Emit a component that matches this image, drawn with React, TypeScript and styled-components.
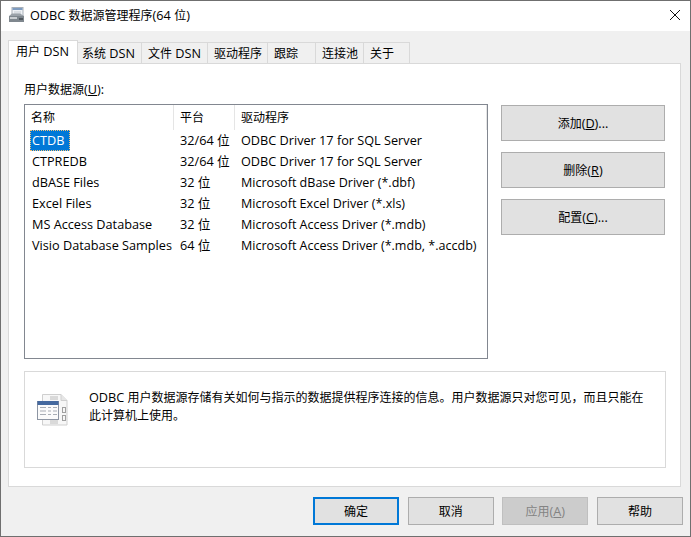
import styled, { createGlobalStyle } from "styled-components";

const Global = createGlobalStyle`
  html, body {
    margin: 0;
    padding: 0;
    background: #f0f0f0;
  }
  body {
    font-family: "Open Sans", "Noto Sans CJK SC", sans-serif;
    font-size: 12px;
    color: #000;
  }
`;

// latin text runs a little larger than the CJK around it
const L = styled.span`
  font-size: 12.7px;
`;

const Window = styled.div`
  width: 691px;
  height: 537px;
  box-sizing: border-box;
  border: 1px solid #6f6f6f;
  display: flex;
  flex-direction: column;
  overflow: hidden;
`;

const TitleBar = styled.div`
  height: 30px;
  flex: none;
  box-sizing: border-box;
  background: #fff;
  display: flex;
  align-items: center;
  padding: 0 8px 2px;
  gap: 5px;
  white-space: pre;
`;

const TitleText = styled.div``;

const CloseButton = styled.div`
  margin-left: auto;
  margin-right: 1px;
  display: flex;
`;

const Body = styled.div`
  flex: 1;
  display: flex;
  flex-direction: column;
  padding: 9px 7px 0;
  background: #f0f0f0;
`;

const Tabs = styled.div`
  display: flex;
  height: 24px;
  flex: none;
  align-items: flex-end;
  position: relative;
  z-index: 1;
`;

const Tab = styled.div<{ $width: number; $active?: boolean; $pad?: number }>`
  width: ${({ $width }) => $width}px;
  height: ${({ $active }) => ($active ? "24px" : "22px")};
  box-sizing: border-box;
  border: 1px solid #d9d9d9;
  border-left-width: ${({ $active }) => ($active ? "1px" : "0")};
  border-bottom: ${({ $active }) => ($active ? "none" : "1px solid #d9d9d9")};
  background: ${({ $active }) => ($active ? "#fff" : "#f0f0f0")};
  padding-left: ${({ $pad }) => $pad ?? 6}px;
  line-height: 21px;
  white-space: pre;
`;

const Panel = styled.div`
  height: 424px;
  flex: none;
  box-sizing: border-box;
  width: 673px;
  margin-top: -1px;
  background: #fff;
  border: 1px solid #d9d9d9;
  padding: 17px 15px 0;
`;

const SourceLabel = styled.div`
  height: 23px;
  line-height: 17px;
`;

const SourceRow = styled.div`
  display: flex;
  gap: 13px;
  align-items: flex-start;
`;

const ListBox = styled.div`
  width: 464px;
  height: 255px;
  box-sizing: border-box;
  border: 1px solid #828790;
  background: #fff;
`;

const HeaderRow = styled.div`
  display: grid;
  grid-template-columns: 149px 61px 1fr;
  height: 25px;
`;

const HeaderCell = styled.div`
  padding-left: 6px;
  line-height: 25px;
  border-right: 1px solid #e5e5e5;
`;

const Row = styled.div`
  display: grid;
  grid-template-columns: 149px 61px 1fr;
  height: 21px;
  line-height: 21px;
  white-space: nowrap;
  font-size: 12.7px;
`;

const Cell = styled.div`
  padding-left: 6px;
  overflow: hidden;
`;

const DriverCell = styled(Cell)<{ $odbc: boolean }>`
  font-size: ${({ $odbc }) => ($odbc ? "12.7px" : "12.55px")};
`;

const NameCell = styled(Cell)<{ $selected?: boolean }>`
  padding-left: 5px;
  span {
    display: inline-block;
    height: 21px;
    padding: 0 2px;
    box-sizing: border-box;
    ${({ $selected }) =>
      $selected
        ? `
      background: #0078d7;
      color: #fff;
      outline: 1px dotted #f5c27a;
      outline-offset: -1px;
      min-width: 40px;
    `
        : ""}
  }
`;

const ButtonColumn = styled.div`
  display: flex;
  flex-direction: column;
  gap: 11px;
  padding-top: 1px;
`;

const Button = styled.div<{ $w?: number; $h?: number; $focused?: boolean; $disabled?: boolean }>`
  width: ${({ $w }) => $w ?? 164}px;
  height: ${({ $h }) => $h ?? 36}px;
  box-sizing: border-box;
  display: flex;
  align-items: center;
  justify-content: center;
  background: ${({ $disabled }) => ($disabled ? "#cccccc" : "#e1e1e1")};
  color: ${({ $disabled }) => ($disabled ? "#838383" : "#000")};
  border: ${({ $focused, $disabled }) =>
    $focused ? "2px solid #0078d7" : $disabled ? "1px solid #bfbfbf" : "1px solid #adadad"};
`;

const InfoBox = styled.div`
  margin-top: 12px;
  width: 642px;
  height: 97px;
  box-sizing: border-box;
  border: 1px solid #d9d9d9;
  display: flex;
  padding: 16px 12px 0 12px;
  gap: 21px;
`;

const InfoIcon = styled.div`
  flex: none;
  padding-top: 6px;
`;

const InfoText = styled.div`
  line-height: 18px;
  width: 560px;
  white-space: pre;
`;

const InfoLine = styled.div``;

const Footer = styled.div`
  display: flex;
  justify-content: flex-end;
  gap: 8.67px;
  padding: 10px 0 0;
`;

const rows = [
  ["CTDB", "32/64 位", "ODBC Driver 17 for SQL Server"],
  ["CTPREDB", "32/64 位", "ODBC Driver 17 for SQL Server"],
  ["dBASE Files", "32 位", "Microsoft dBase Driver (*.dbf)"],
  ["Excel Files", "32 位", "Microsoft Excel Driver (*.xls)"],
  ["MS Access Database", "32 位", "Microsoft Access Driver (*.mdb)"],
  ["Visio Database Samples", "64 位", "Microsoft Access Driver (*.mdb, *.accdb)"],
];

function AppIcon() {
  return (
    <svg width="16" height="16" viewBox="0 0 16 16">
      <rect x="3" y="0.5" width="11" height="8" fill="#eef1f5" stroke="#a9b0b8" />
      <rect x="3.5" y="1" width="10" height="2" fill="#7f9cc0" />
      <path d="M5 5 h7 M5 7 h7" stroke="#c3c8ce" />
      <path d="M0 9 L3 6.5 H11 L15 9 V15 H0 Z" fill="#9aa1a8" />
      <rect x="0" y="9" width="15" height="6" fill="#7f878e" />
      <rect x="1" y="10" width="7" height="2" fill="#c9cdd1" />
      <rect x="10" y="11" width="4" height="2" fill="#50585f" />
    </svg>
  );
}

function DataIcon() {
  return (
    <svg width="31" height="32" viewBox="0 0 31 32">
      <path d="M5.5 0.5 H24 L30 6.5 V31 H5.5 Z" fill="#f7f7f7" stroke="#cfcfcf" />
      <path d="M24 0.5 V6.5 H30" fill="#e6e6e6" stroke="#cfcfcf" />
      <path d="M13 3 h8 M13 5 h8 M13 27 h8 M13 29 h8" stroke="#bcbcbc" />
      <rect x="25.5" y="13.5" width="3" height="5" fill="none" stroke="#a0a0a0" />
      <rect x="25.5" y="21.5" width="3" height="5" fill="none" stroke="#a0a0a0" />
      <rect x="0.5" y="7.5" width="21" height="18" fill="#fbfbfb" stroke="#8d95a3" />
      <rect x="0.5" y="7" width="21" height="4" fill="#45699f" />
      <path
        d="M3 13.5 h6 M11 13.5 h3 M16 13.5 h4 M3 17 h6 M11 17 h3 M16 17 h4 M3 20.5 h6 M11 20.5 h3 M16 20.5 h4"
        stroke="#a9aeb6"
        strokeWidth="1.2"
      />
    </svg>
  );
}

export default function App() {
  return (
    <>
      <Global />
      <Window>
        <TitleBar>
          <AppIcon />
          <TitleText><L>ODBC </L>数据源管理程序<L>(64 </L>位<L>)</L></TitleText>
          <CloseButton>
            <svg width="12" height="12" viewBox="0 0 12 12">
              <path d="M1 1 L11 11 M11 1 L1 11" stroke="#111" strokeWidth="1" />
            </svg>
          </CloseButton>
        </TitleBar>
        <Body>
          <Tabs>
            <Tab $width={70} $active $pad={7}>用户<L> DSN</L></Tab>
            <Tab $width={64} $pad={4}>系统<L> DSN</L></Tab>
            <Tab $width={66}>文件<L> DSN</L></Tab>
            <Tab $width={60}>驱动程序</Tab>
            <Tab $width={48}>跟踪</Tab>
            <Tab $width={48}>连接池</Tab>
            <Tab $width={46}>关于</Tab>
          </Tabs>
          <Panel>
            <SourceLabel>用户数据源<L>(<u>U</u>):</L></SourceLabel>
            <SourceRow>
              <ListBox>
                <HeaderRow>
                  <HeaderCell>名称</HeaderCell>
                  <HeaderCell>平台</HeaderCell>
                  <HeaderCell>驱动程序</HeaderCell>
                </HeaderRow>
                {rows.map((row, i) => (
                  <Row key={row[0]}>
                    <NameCell $selected={i === 0}><span>{row[0]}</span></NameCell>
                    <Cell>{row[1]}</Cell>
                    <DriverCell $odbc={row[2].startsWith("ODBC")}>{row[2]}</DriverCell>
                  </Row>
                ))}
              </ListBox>
              <ButtonColumn>
                <Button>添加<L>(<u>D</u>)...</L></Button>
                <Button>删除<L>(<u>R</u>)</L></Button>
                <Button>配置<L>(<u>C</u>)...</L></Button>
              </ButtonColumn>
            </SourceRow>
            <InfoBox>
              <InfoIcon><DataIcon /></InfoIcon>
              <InfoText>
                <InfoLine><L>ODBC </L>用户数据源存储有关如何与指示的数据提供程序连接的信息。用户数据源只对您可见，而且只能在</InfoLine>
                <InfoLine>此计算机上使用。</InfoLine>
              </InfoText>
            </InfoBox>
          </Panel>
          <Footer>
            <Button $w={86} $h={28} $focused>确定</Button>
            <Button $w={86} $h={28}>取消</Button>
            <Button $w={86} $h={28} $disabled>应用<L>(<u>A</u>)</L></Button>
            <Button $w={86} $h={28}>帮助</Button>
          </Footer>
        </Body>
      </Window>
    </>
  );
}
